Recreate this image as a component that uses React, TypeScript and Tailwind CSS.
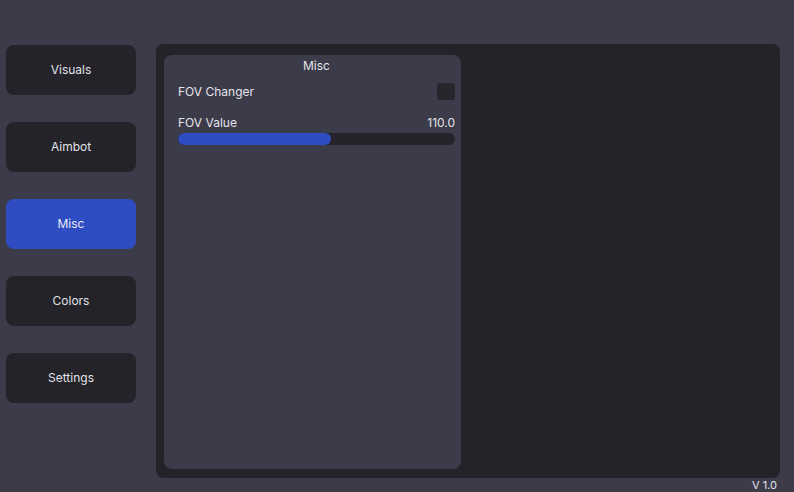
import { useState } from "react";

const tabs = ["Visuals", "Aimbot", "Misc", "Colors", "Settings"];

export default function App() {
  const [active, setActive] = useState("Misc");
  const fov = 110;
  const pct = ((fov - 30) / (175 - 30)) * 100;

  return (
    <div
      className="relative w-[794px] h-[492px] overflow-hidden bg-[#3b3b49] text-[#e4e4ea] text-[12px]"
      style={{ fontFamily: "Inter, 'Noto Sans', sans-serif" }}
    >
      <div className="flex pt-[44px] pl-[6px] pr-[14px]">
        {/* side tabs */}
        <div className="flex flex-col gap-[27px] pt-px w-[130px] shrink-0">
          {tabs.map((t) => (
            <button
              key={t}
              onClick={() => setActive(t)}
              className={
                t === active
                  ? "h-[50px] rounded-[8px] bg-[#2f4dc2] text-[#e8eaf5]"
                  : "h-[50px] rounded-[8px] bg-[#232329] text-[#e2e2e8]"
              }
            >
              {t}
            </button>
          ))}
        </div>

        {/* content area */}
        <div className="ml-[20px] flex-1 h-[434px] rounded-[8px] bg-[#232329] p-[8px] pt-[11px]">
          <div className="w-[297px] h-[414px] rounded-[8px] bg-[#3b3b49] pl-[14px] pr-[6px] pt-[4px]">
            <div className="text-center leading-[14px]">Misc</div>

            <div className="flex items-center justify-between mt-[10px] h-[17px]">
              <span>FOV Changer</span>
              <div className="w-[18px] h-[17px] rounded-[3px] bg-[#26262d]" />
            </div>

            <div className="flex items-center justify-between mt-[16px] leading-[14px]">
              <span>FOV Value</span>
              <span>110.0</span>
            </div>
            <div className="mt-[3px] h-[12px] rounded-full bg-[#232329] overflow-hidden">
              <div className="h-full rounded-full bg-[#2f4dc2]" style={{ width: `${pct}%` }} />
            </div>
          </div>
        </div>
      </div>

      <div className="absolute right-[17px] top-[478px] leading-[14px] text-[11px] text-[#e4e4ea]">V 1.0</div>
    </div>
  );
}
